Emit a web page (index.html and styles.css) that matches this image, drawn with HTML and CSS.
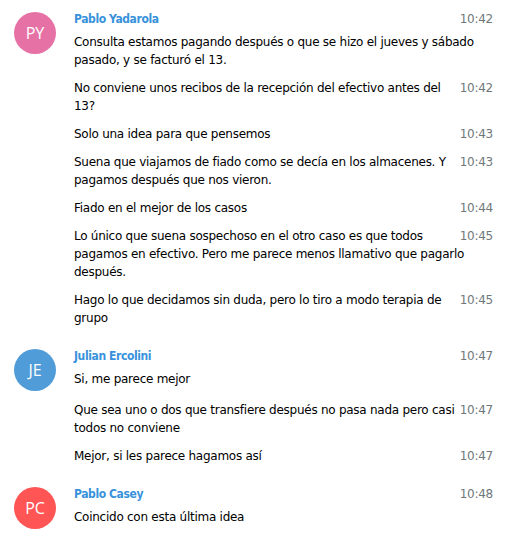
FILE: index.html
```html
<!DOCTYPE html>
<html lang="es">
<head>
  <meta charset="UTF-8">
  <meta name="viewport" content="width=device-width, initial-scale=1.0">
  <title>Chat</title>
  <link rel="stylesheet" href="styles.css">
</head>
<body>

  <div class="history">

    <div class="message">
      <div class="userpic pink">PY</div>
      <div class="body">
        <div class="time">10:42</div>
        <div class="from_name">Pablo Yadarola</div>
        <div class="text">Consulta estamos pagando después o que se hizo el jueves y sábado pasado, y se facturó el 13.</div>
      </div>
    </div>

    <div class="message joined">
      <div class="body">
        <div class="time">10:42</div>
        <div class="text">No conviene unos recibos de la recepción del efectivo antes del 13?</div>
      </div>
    </div>

    <div class="message joined">
      <div class="body">
        <div class="time">10:43</div>
        <div class="text">Solo una idea para que pensemos</div>
      </div>
    </div>

    <div class="message joined">
      <div class="body">
        <div class="time">10:43</div>
        <div class="text">Suena que viajamos de fiado como se decía en los almacenes. Y pagamos después que nos vieron.</div>
      </div>
    </div>

    <div class="message joined">
      <div class="body">
        <div class="time">10:44</div>
        <div class="text">Fiado en el mejor de los casos</div>
      </div>
    </div>

    <div class="message joined">
      <div class="body">
        <div class="time">10:45</div>
        <div class="text">Lo único que suena sospechoso en el otro caso es que todos pagamos en efectivo. Pero me parece menos llamativo que pagarlo después.</div>
      </div>
    </div>

    <div class="message joined">
      <div class="body">
        <div class="time">10:45</div>
        <div class="text">Hago lo que decidamos sin duda, pero lo tiro a modo terapia de grupo</div>
      </div>
    </div>

    <div class="message">
      <div class="userpic blue">JE</div>
      <div class="body">
        <div class="time">10:47</div>
        <div class="from_name">Julian Ercolini</div>
        <div class="text">Si, me parece mejor</div>
      </div>
    </div>

    <div class="message joined">
      <div class="body">
        <div class="time">10:47</div>
        <div class="text">Que sea uno o dos que transfiere después no pasa nada pero casi todos no conviene</div>
      </div>
    </div>

    <div class="message joined">
      <div class="body">
        <div class="time">10:47</div>
        <div class="text">Mejor, si les parece hagamos así</div>
      </div>
    </div>

    <div class="message">
      <div class="userpic red">PC</div>
      <div class="body">
        <div class="time">10:48</div>
        <div class="from_name">Pablo Casey</div>
        <div class="text">Coincido con esta última idea</div>
      </div>
    </div>

  </div>

</body>
</html>
```

FILE: styles.css
```css
body {
  margin: 0;
  background: #fff;
  color: #000;
  font: 12px/18px 'DejaVu Sans', sans-serif;
  letter-spacing: -0.26px;
}

.history {
  padding: 0;
}

.message {
  display: flex;
  padding: 10px 25px 10px 14px;
}

.message.joined {
  padding-top: 0;
  padding-left: 74px;
}

.userpic {
  flex: none;
  width: 42px;
  height: 42px;
  margin-top: 2px;
  margin-right: 18px;
  border-radius: 50%;
  color: #fff;
  text-align: center;
  font: 16px/42px 'Open Sans', sans-serif;
  letter-spacing: 0;
}

.pink { background: #e671a5; }
.blue { background: #4f9cd9; }
.red { background: #ff5555; }

.body {
  flex: 1;
  min-width: 0;
}

.time {
  float: right;
  color: #70777b;
}

.from_name {
  color: #3892db;
  font-family: 'DejaVu Sans Condensed', 'DejaVu Sans', sans-serif;
  font-weight: bold;
  letter-spacing: -0.4px;
  padding-bottom: 5px;
}

.text {
  word-wrap: break-word;
}
```
